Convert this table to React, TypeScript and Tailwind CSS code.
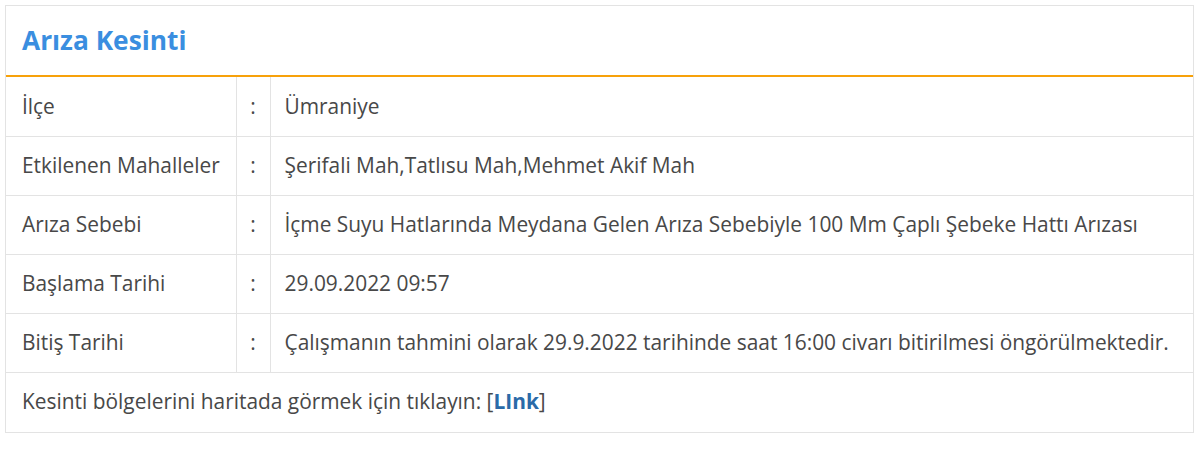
import React from "react";

const ROWS = [
  { label: "İlçe", value: "Ümraniye" },
  { label: "Etkilenen Mahalleler", value: "Şerifali Mah,Tatlısu Mah,Mehmet Akif Mah" },
  {
    label: "Arıza Sebebi",
    value: "İçme Suyu Hatlarında Meydana Gelen Arıza Sebebiyle 100 Mm Çaplı Şebeke Hattı Arızası",
  },
  { label: "Başlama Tarihi", value: "29.09.2022 09:57" },
  {
    label: "Bitiş Tarihi",
    value: "Çalışmanın tahmini olarak 29.9.2022 tarihinde saat 16:00 civarı bitirilmesi öngörülmektedir.",
  },
];

export default function App() {
  return (
    <div className="w-[1200px] h-[450px] bg-white pt-[5px] pl-[5px] font-['Open_Sans',sans-serif] text-[#484848]">
      <div className="w-[1189px] border border-[#e3e3e3]">
        <div className="h-[71px] flex items-center px-4 border-b-2 border-[#f7a10a]">
          <h1 className="text-[26.3px] font-bold text-[#3a8ee0] leading-none">Arıza Kesinti</h1>
        </div>
        <table className="w-full border-collapse text-[20.9px]">
          <tbody>
            {ROWS.map((r) => (
              <tr key={r.label} className="h-[59px] border-b border-[#e3e3e3]">
                <td className="w-[230px] pl-4 border-r border-[#e3e3e3]">{r.label}</td>
                <td className="w-[34px] text-center border-r border-[#e3e3e3]">:</td>
                <td className="pl-[14px]">{r.value}</td>
              </tr>
            ))}
          </tbody>
        </table>
        <div className="h-[59px] flex items-center pl-4 text-[20.9px]">
          <span>
            Kesinti bölgelerini haritada görmek için tıklayın: [
            <a className="font-bold text-[#2a6aa8]">LInk</a>]
          </span>
        </div>
      </div>
    </div>
  );
}
